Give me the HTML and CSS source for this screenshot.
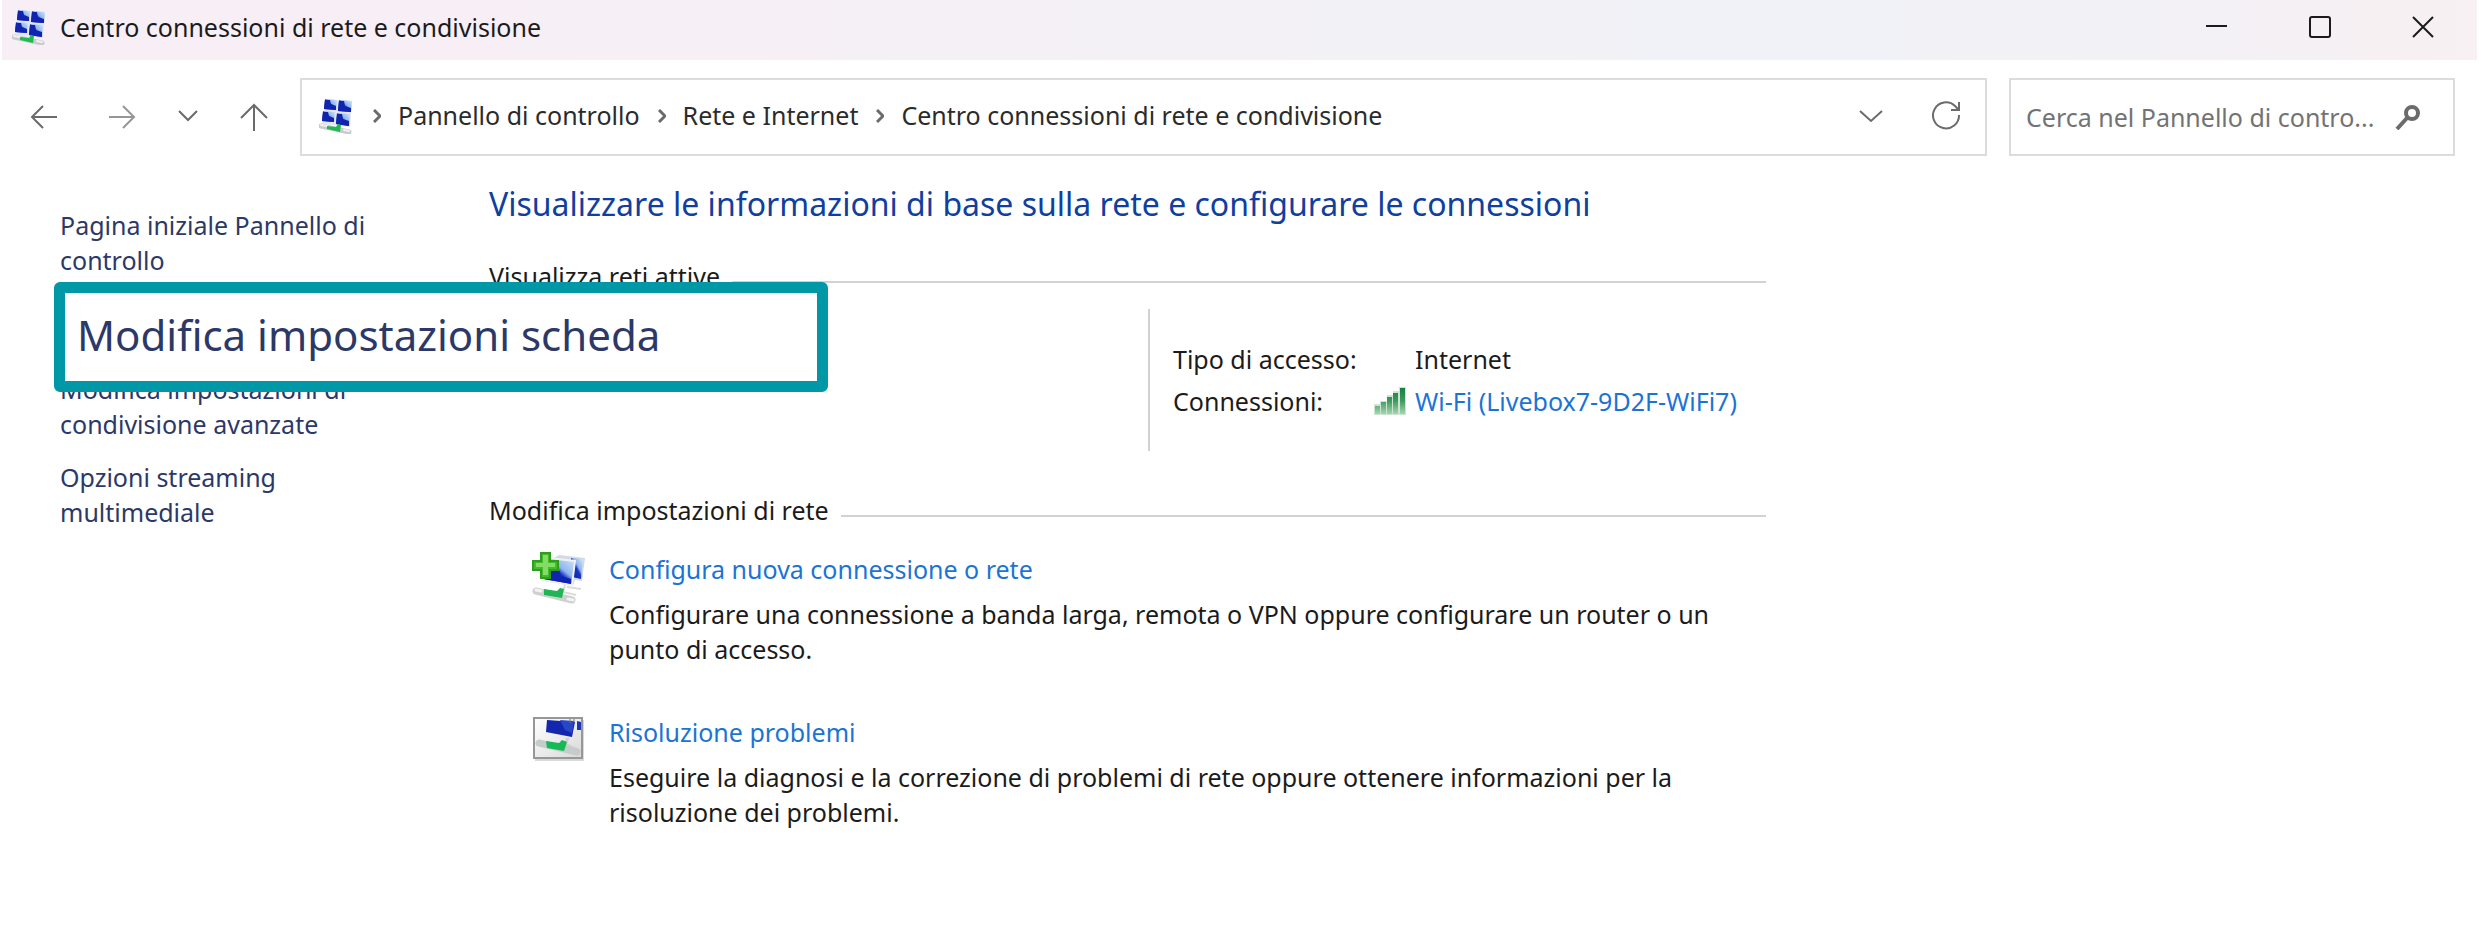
FILE: index.html
```html
<!DOCTYPE html>
<html lang="it">
<head>
<meta charset="utf-8">
<title>Centro connessioni di rete e condivisione</title>
<link rel="stylesheet" href="styles.css">
</head>

<body>
<!-- shared shapes -->
<svg class="defs" width="0" height="0" aria-hidden="true">
	<defs>
		<linearGradient id="screen" x1="0" y1="1" x2="1" y2="0">
			<stop offset="0" stop-color="#0a1a9c"/>
			<stop offset="0.48" stop-color="#1736c4"/>
			<stop offset="0.6" stop-color="#8fb4ee"/>
			<stop offset="1" stop-color="#d9eafc"/>
		</linearGradient>
		<linearGradient id="panel" x1="0" y1="0" x2="1" y2="1">
			<stop offset="0" stop-color="#ffffff"/>
			<stop offset="1" stop-color="#d9d9d9"/>
		</linearGradient>
		<linearGradient id="bar" x1="0" y1="0" x2="0" y2="1">
			<stop offset="0" stop-color="#15803f"/>
			<stop offset="0.5" stop-color="#3f9a60"/>
			<stop offset="1" stop-color="#a5d6b0"/>
		</linearGradient>
		<symbol id="network" viewBox="0 0 36 36">
			<path d="M6 1 33 3 31 29 3 26Z" fill="#e3e6ec"/>
			<path d="M6 1 18 2 17 12 5 11Z" fill="url(#screen)"/>
			<path d="M20 2 33 3 32 14 19 13Z" fill="url(#screen)"/>
			<path d="M4 13 16 14 15 24 3 23Z" fill="url(#screen)"/>
			<path d="M18 15 31 16 30 28 17 26Z" fill="url(#screen)"/>
			<path d="M6 2 11 2 12 6 17 8 17 12 5 11ZM20 3 25 3 26 8 32 10 32 14 19 13ZM4 14 9 14 10 18 15 20 15 24 3 23ZM18 16 23 16 24 21 30 23 30 28 17 26Z" fill="#1024b0"/>
			<path d="M2 28 30 34" stroke="#c9cbcd" stroke-width="5" stroke-linecap="round"/>
			<path d="M2 27 8 28M25 32 30 33" stroke="#f1f1f1" stroke-width="2" stroke-linecap="round"/>
			<path d="M8 28 17 29 19 26 22 27 21 34 8 31Z" fill="#1dbb50"/>
		</symbol>
	</defs>
</svg>

<header class="titlebar">
	<svg class="app-icon"><use href="#network"/></svg>
	<span class="title">Centro connessioni di rete e condivisione</span>
	<div class="window-buttons">
		<button type="button" aria-label="Riduci a icona"><svg width="24" height="24" viewBox="0 0 24 24"><path d="M1 11H22"/></svg></button>
		<button type="button" aria-label="Ingrandisci"><svg width="24" height="24" viewBox="0 0 24 24"><rect x="2" y="2" width="20" height="20" rx="2"/></svg></button>
		<button type="button" aria-label="Chiudi"><svg width="24" height="24" viewBox="0 0 24 24"><path d="M2 2 22 22M22 2 2 22"/></svg></button>
	</div>
</header>

<nav class="toolbar">
	<div class="history">
		<button type="button" aria-label="Indietro"><svg width="28" height="28" viewBox="0 0 28 28"><path d="M27 14H2M13 3 2 14 13 25"/></svg></button>
		<button type="button" class="off" aria-label="Avanti"><svg width="28" height="28" viewBox="0 0 28 28"><path d="M1 14H26M15 3 26 14 15 25"/></svg></button>
		<button type="button" aria-label="Percorsi recenti"><svg width="20" height="28" viewBox="0 0 20 28"><path d="M1 8 10 17 19 8"/></svg></button>
		<button type="button" aria-label="Su"><svg width="28" height="28" viewBox="0 0 28 28"><path d="M14 28V2M1 15 14 2 27 15"/></svg></button>
	</div>
	<div class="address">
		<svg class="app-icon"><use href="#network"/></svg>
		<svg class="sep" width="8" height="14" viewBox="0 0 8 14"><path d="M1 1 7 7 1 13"/></svg>
		<a href="#">Pannello di controllo</a>
		<svg class="sep" width="8" height="14" viewBox="0 0 8 14"><path d="M1 1 7 7 1 13"/></svg>
		<a href="#">Rete e Internet</a>
		<svg class="sep" width="8" height="14" viewBox="0 0 8 14"><path d="M1 1 7 7 1 13"/></svg>
		<a href="#">Centro connessioni di rete e condivisione</a>
		<div class="address-buttons">
			<button type="button" aria-label="Posizioni precedenti"><svg width="24" height="28" viewBox="0 0 24 28"><path d="M1 9 12 19 23 9"/></svg></button>
			<button type="button" aria-label="Aggiorna"><svg width="30" height="30" viewBox="0 0 30 30"><path d="M28 14A13 13 0 1 1 24 5L28 9M28 1V9H20"/></svg></button>
		</div>
	</div>
	<label class="search">
		<input type="text" aria-label="Cerca" placeholder="Cerca nel Pannello di contro...">
		<svg width="26" height="26" viewBox="0 0 26 26"><circle cx="17" cy="9" r="6"/><path d="M12 14 2 25"/></svg>
	</label>
</nav>

<div class="content">
	<ul class="sidebar">
		<li><a href="#">Pagina iniziale Pannello di controllo</a></li>
		<li class="marked"><a class="callout" href="#">Modifica impostazioni scheda</a></li>
		<li><a href="#">Modifica impostazioni di condivisione avanzate</a></li>
		<li><a href="#">Opzioni streaming multimediale</a></li>
	</ul>

	<main class="main">
		<h1>Visualizzare le informazioni di base sulla rete e configurare le connessioni</h1>

		<h2>Visualizza reti attive</h2>
		<dl class="network">
			<dt>Tipo di accesso:</dt>
			<dd>Internet</dd>
			<dt>Connessioni:</dt>
			<dd>
				<svg class="signal" width="32" height="28" viewBox="0 0 32 28">
					<path d="M0 28V17H6V14H13V8H19V4H25V0H32V28Z" fill="#cfe3d3"/>
					<path d="M1 19H6V27H1ZM7 15H12V27H7ZM13 10H18V27H13ZM19 6H24V27H19ZM26 1H31V27H26Z" fill="url(#bar)"/>
				</svg>
				<a href="#">Wi-Fi (Livebox7-9D2F-WiFi7)</a>
			</dd>
		</dl>

		<h2>Modifica impostazioni di rete</h2>
		<div class="task">
			<svg width="54" height="54" viewBox="0 2 54 54">
				<path d="M27 5 53 8 50 31 43 30 41 36 11 31 15 12Z" fill="#d5d9e2"/>
				<path d="M39 8 51 9 49 29 40 27Z" fill="url(#screen)"/>
				<path d="M16 8 43 11 40 35 11 30Z" fill="url(#screen)" stroke="#eef1f6" stroke-width="2"/>
				<path d="M14 20 27 20 29 26 39 29 39 34 12 29Z" fill="#1024b0"/>
				<path d="M33 35 31 42 44 45M35 37 49 39" fill="none" stroke="#dcdcdc" stroke-width="2"/>
				<path d="M4 41 40 50" stroke="#cfd1d1" stroke-width="7" stroke-linecap="round"/>
				<path d="M4 40 9 41M36 49 41 50" stroke="#f3f3f3" stroke-width="3" stroke-linecap="round"/>
				<path d="M12 39 25 41 28 38 32 39 30 48 12 45Z" fill="#20b658"/>
				<path d="M9 3H18V11H26V20H18V28H9V20H1V11H9Z" fill="#43bb2b" stroke="#309c20" stroke-width="2"/>
				<path d="M11 5H16V13H23V17H16V25H11V17H4V13H11Z" fill="#82dc65"/>
			</svg>
			<div>
				<a href="#">Configura nuova connessione o rete</a>
				<p>Configurare una connessione a banda larga, remota o VPN oppure configurare un router o un punto di accesso.</p>
			</div>
		</div>
		<div class="task">
			<svg width="54" height="54" viewBox="0 0 54 54">
				<rect x="3" y="5" width="49" height="41" fill="#d9d9d9"/>
				<rect x="2" y="3" width="48" height="40" fill="url(#panel)" stroke="#979797" stroke-width="2"/>
				<path d="M15 5 43 7 40 22 14 17Z" fill="#1226ae"/>
				<path d="M28 5 42 6 40 18 33 15Z" fill="#2847c8"/>
				<path d="M45 6 49 7 49 15 45 15Z" fill="#1c35b5"/>
				<path d="M38 4V8M42 4V7" stroke="#777" stroke-width="1"/>
				<path d="M36 23 33 29 48 36" fill="none" stroke="#d0d0d0" stroke-width="3"/>
				<path d="M7 28 45 37" stroke="#c6cccb" stroke-width="7" stroke-linecap="round"/>
				<path d="M14 26 27 28 30 25 35 27 32 36 15 33Z" fill="#17b856"/>
			</svg>
			<div>
				<a href="#">Risoluzione problemi</a>
				<p>Eseguire la diagnosi e la correzione di problemi di rete oppure ottenere informazioni per la risoluzione dei problemi.</p>
			</div>
		</div>
	</main>
</div>
</body>
</html>
```

FILE: styles.css
```css
* {
	box-sizing: border-box;
}
body {
	margin: 0;
	background-color: white;
	color: #1b1b1b;
	font-family: "Noto Sans", "Open Sans", sans-serif;
	font-size: 25px;
	line-height: 35px;
}
a {
	color: #1b74d4;
	text-decoration: none;
}
button {
	display: flex;
	padding: 0;
	border: 0;
	background: none;
}
button svg, .search svg, .sep {
	fill: none;
	stroke: #6b6b6b;
	stroke-width: 2;
}
.defs {
	position: absolute;
}
.app-icon {
	width: 36px;
	height: 36px;
	flex: none;
}

/* title bar */
.titlebar {
	display: flex;
	align-items: center;
	height: 60px;
	margin: 0 2px;
	padding: 0 42px 6px 10px;
	background: linear-gradient(90deg, #f8eef6 0%, #f8eff6 20%, #f4f1f6 45%, #f0f2f7 72%, #f3f1f6 88%, #f8f0f2 100%);
}
.title {
	margin-left: 12px;
}
.window-buttons {
	display: flex;
	gap: 79px;
	margin-left: auto;
}
.window-buttons svg {
	stroke: #1b1b1b;
}

/* address row */
.toolbar {
	display: flex;
	align-items: center;
	padding: 18px 24px 0 30px;
}
.history {
	display: flex;
	gap: 42px;
	margin-right: 32px;
}
.off {
	margin-left: 8px;
	opacity: 0.7;
}
.address, .search {
	display: flex;
	align-items: center;
	height: 78px;
	border: 2px solid #dcdcdc;
}
.address {
	flex: 1;
	padding: 0 24px 3px 17px;
}
.address a {
	color: #2b2b2b;
}
.sep {
	margin: 0 17px 0 18px;
	stroke-width: 3;
}
.address-buttons {
	display: flex;
	align-items: center;
	gap: 48px;
	margin-left: auto;
}
.search {
	width: 446px;
	margin-left: 22px;
	padding: 0 32px 0 15px;
}
.search input {
	flex: 1;
	min-width: 0;
	padding: 0;
	border: 0;
	outline: 0;
	background: none;
	font: inherit;
}
.search input::placeholder {
	color: #737373;
	opacity: 1;
}
.search svg {
	stroke-width: 4;
}

/* left links */
.content {
	display: flex;
}
.sidebar {
	flex: none;
	width: 489px;
	margin: 0;
	padding: 52px 109px 0 60px;
	list-style: none;
}
.sidebar li {
	margin-bottom: 18px;
}
.sidebar a {
	color: #2c3968;
}
.sidebar .marked {
	position: relative;
	height: 58px;
}
.callout {
	position: absolute;
	top: -14px;
	left: -6px;
	width: 774px;
	height: 110px;
	padding: 0 12px;
	border: 11px solid #0097a7;
	border-radius: 6px;
	background-color: white;
	font-size: 42px;
	line-height: 84px;
}

/* right side */
.main {
	flex: 0 1 1277px;
	padding-top: 25px;
}
h1 {
	margin: 0 0 32px;
	color: #103f9f;
	font-size: 32px;
	font-weight: normal;
	line-height: 46px;
}
h2 {
	display: flex;
	align-items: center;
	gap: 12px;
	margin: 0;
	font-size: 25px;
	font-weight: normal;
}
h2::after {
	content: "";
	flex: 1;
	height: 2px;
	margin-top: 10px;
	background-color: #d2d2d2;
}
.network {
	display: grid;
	grid-template-columns: 242px auto;
	align-content: center;
	row-gap: 7px;
	height: 142px;
	margin: 15px 0 42px 659px;
	padding-left: 23px;
	border-left: 2px solid #d2d2d2;
	white-space: nowrap;
}
.network dd {
	position: relative;
	margin: 0;
}
.signal {
	position: absolute;
	right: 100%;
	top: 3px;
	margin-right: 9px;
}
.task {
	display: flex;
	gap: 23px;
	margin: 24px 40px 48px 43px;
}
.task svg {
	flex: none;
}
.task p {
	margin: 10px 0 0;
}
```
